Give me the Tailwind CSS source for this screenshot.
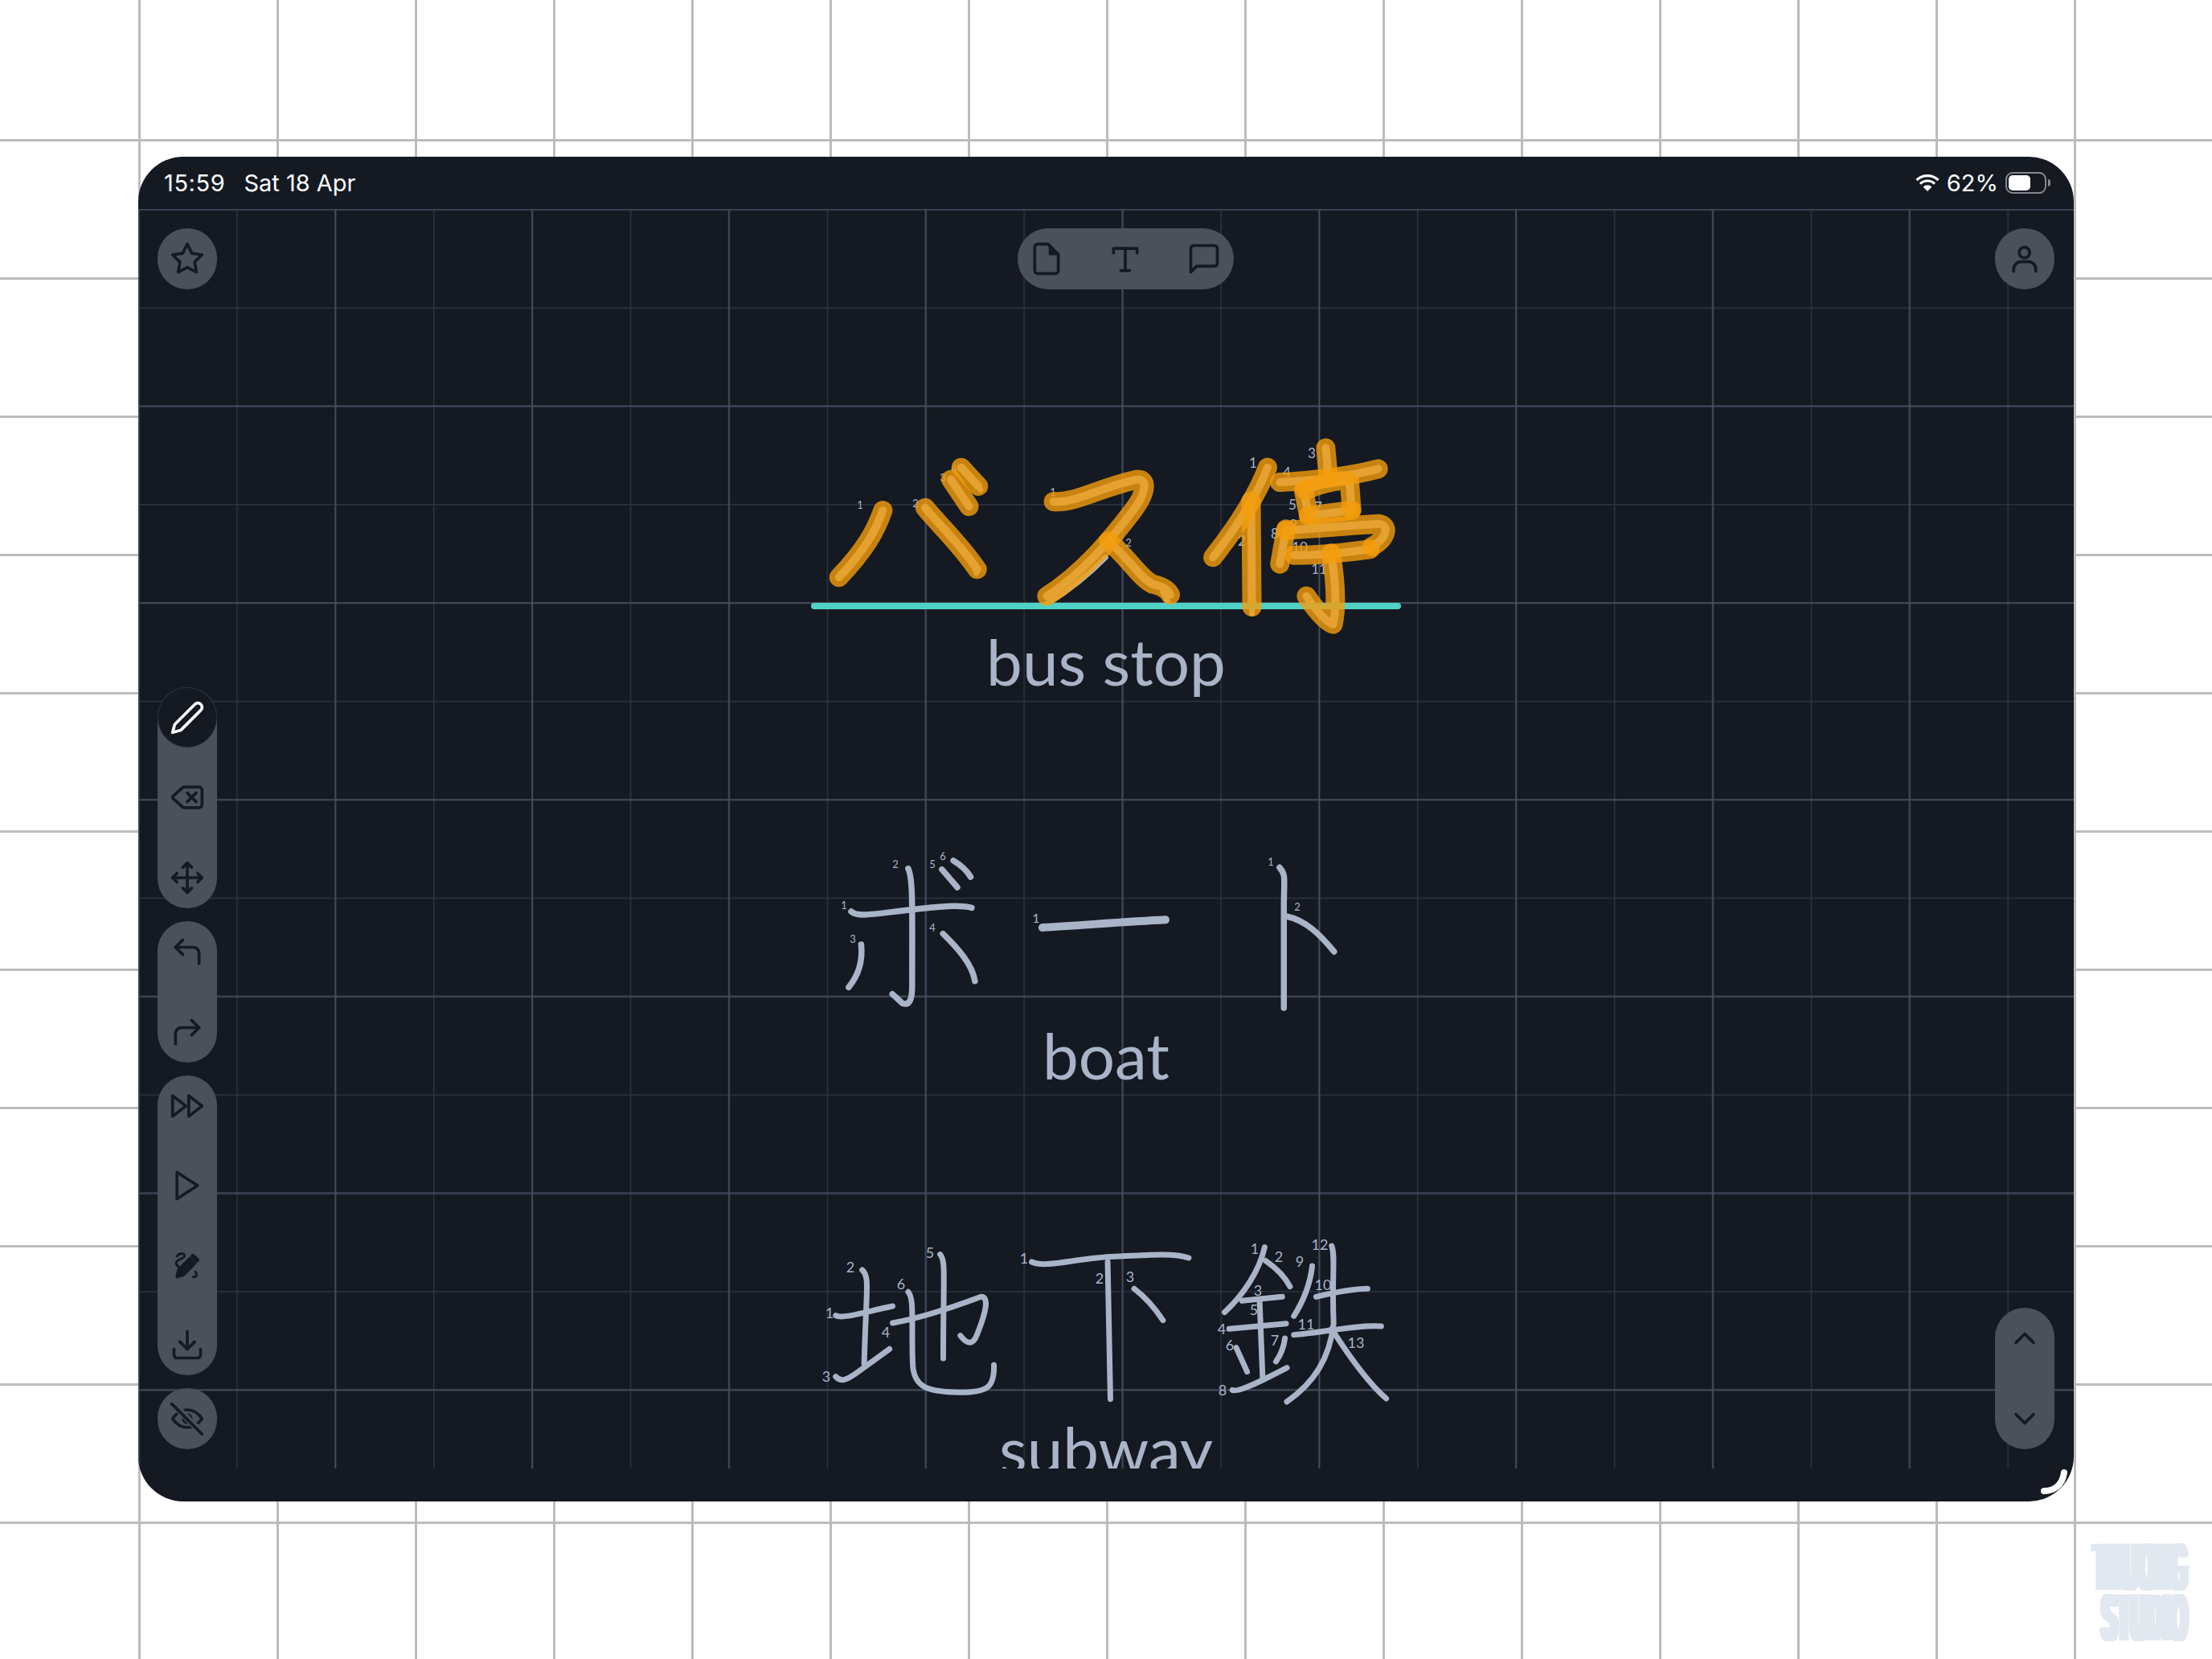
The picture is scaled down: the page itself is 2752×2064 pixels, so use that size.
<!DOCTYPE html>
<html lang="en">
<head>
    <meta charset="UTF-8">
    <title>Kana practice</title>
    <script src="https://cdn.jsdelivr.net/npm/@tailwindcss/browser@4"></script>
</head>
<body class="bg-white">
<div class="relative w-[2752px] h-[2064px] overflow-hidden pl-[172px] pt-[195px] font-['Inter',sans-serif]">

    <!-- paper grid -->
    <div class="absolute left-0 right-0 top-[173px] bottom-0 bg-[linear-gradient(#bcbcbc_3px,transparent_3px)] bg-[size:172px_172px]"></div>
    <div class="absolute left-[172px] right-0 top-0 bottom-0 bg-[linear-gradient(90deg,#bcbcbc_3px,transparent_3px)] bg-[size:172px_172px]"></div>

    <!-- tablet -->
    <div class="relative w-[2408px] h-[1673px] rounded-[56px] bg-[#141922] overflow-hidden">

        <!-- status bar -->
        <div class="h-[65px] pl-[32px] pr-[29px] flex items-center justify-between text-white text-[29px] leading-none">
            <div class="flex gap-[23px]">
                <span class="tracking-[0.6px]">15:59</span>
                <span>Sat 18 Apr</span>
            </div>
            <div class="flex items-center">
                <svg class="w-[30px] h-[21px] mr-[9px]" viewBox="0 0 30 21" fill="none" stroke="white" stroke-width="3.2">
                    <path d="M1.5 7 A19.5 19.5 0 0 1 28.5 7"/>
                    <path d="M6 11.6 A13 13 0 0 1 24 11.6"/>
                    <path d="M15 21 L9.6 15.4 A7.6 7.6 0 0 1 20.4 15.4 Z" fill="white" stroke="none"/>
                </svg>
                <span class="mr-[9px]">62%</span>
                <div class="w-[51px] h-[27px] rounded-[9px] border-2 border-[#85888f] p-[2px]">
                    <div class="w-[27px] h-full rounded-[5px] bg-white"></div>
                </div>
                <div class="w-[3px] h-[9px] ml-[2px] rounded-r-full bg-[#85888f]"></div>
            </div>
        </div>

        <!-- writing canvas -->
        <div class="relative h-[1567px] overflow-hidden flex flex-col items-center pt-[280px] text-[#aab4c8] text-[80px] leading-[64px] font-['Lato',sans-serif]">
            <svg class="absolute inset-0 w-full h-full" fill="none">
                <defs>
                    <pattern id="sheet" width="244.8" height="244.8" patternUnits="userSpaceOnUse" patternTransform="translate(-60.6 -60.6)">
                        <path d="M183.6 0V244.8M0 183.6H244.8" stroke="#2d3441" stroke-width="1.5"/>
                        <path d="M61.2 0V244.8M0 61.2H244.8" stroke="#454e60" stroke-width="2"/>
                    </pattern>
                </defs>
                <rect width="100%" height="100%" fill="url(#sheet)"/>
            </svg>

            <!-- バス停 -->
            <svg class="relative shrink-0 overflow-visible [&_path]:[vector-effect:non-scaling-stroke]" width="800" height="250" viewBox="976 540 800 250" fill="none" stroke-linecap="round" stroke-linejoin="round">
                <defs>
                    <g id="bus" transform="translate(980 520) scale(.5102 .3333)">
                        <path d="M232 345C215 420 190 490 125 595"/>
                        <path d="M335 335C370 400 420 470 462 565"/>
                        <path d="M398 230L442 330"/>
                        <path d="M423 185L465 255"/>
                        <path d="M648 312C700 320 760 260 850 230C880 225 875 280 840 350C790 450 720 580 632 665"/>
                        <path d="M782 460C830 520 860 600 890 620C920 630 930 650 933 660"/>
                        <path d="M1170 185C1150 270 1100 400 1037 520"/>
                        <path d="M1130 310L1132 705"/>
                        <path d="M1312 112L1318 215"/>
                        <path d="M1200 240C1280 235 1380 215 1440 190"/>
                        <path d="M1258 270L1270 360"/>
                        <path d="M1262 270C1300 245 1350 225 1370 240L1375 340"/>
                        <path d="M1270 365L1375 345"/>
                        <path d="M1215 415L1200 545"/>
                        <path d="M1215 420C1300 410 1380 400 1440 395C1470 400 1460 450 1425 480"/>
                        <path d="M1235 512C1300 515 1370 500 1420 490"/>
                        <path d="M1325 505C1335 600 1340 700 1330 770C1310 760 1280 700 1265 665"/>
                    </g>
                </defs>
                <use href="#bus" stroke="#aab4c8" stroke-width="10"/>
                <g transform="translate(980 520) scale(.5102 .3333)" stroke="#aab4c8" stroke-width="7">
                    <path d="M465 250L470 268"/>
                    <path d="M458 565L460 578"/>
                    <path d="M775 520C730 590 690 640 635 690"/>
                    <path d="M915 650L927 685"/>
                    <path d="M1132 705L1132 730"/>
                </g>
                <g fill="#aab4c8" stroke="none" font-size="13" text-anchor="middle" dominant-baseline="central">
                    <text x="1070" y="628">1</text>
                    <text x="1139" y="626">2</text>
                    <text x="1173" y="594">3</text>
                    <text x="1187" y="583">4</text>
                    <text x="1310" y="612">1</text>
                    <text x="1404" y="675">2</text>
                    <g font-size="17">
                        <text x="1559" y="575">1</text>
                        <text x="1545" y="672">2</text>
                        <text x="1632" y="563">3</text>
                        <text x="1601" y="587">4</text>
                        <text x="1608" y="627">5</text>
                        <text x="1628" y="607">6</text>
                        <text x="1640" y="630">7</text>
                        <text x="1586" y="663">8</text>
                        <text x="1609" y="652">9</text>
                        <text x="1617" y="680">10</text>
                        <text x="1641" y="707">11</text>
                    </g>
                </g>
                <path d="M1013 754H1739" stroke="#4fd1c5" stroke-width="8"/>
                <use href="#bus" stroke="#f59e0b" stroke-opacity=".8" stroke-width="24"/>
            </svg>
            <p class="relative">bus stop</p>

            <!-- ボート -->
            <svg class="relative shrink-0 mt-[196px] overflow-visible [&_path]:[vector-effect:non-scaling-stroke]" width="800" height="230" viewBox="976 1050 800 230" fill="none" stroke="#aab4c8" stroke-width="7.5" stroke-linecap="round" stroke-linejoin="round">
                <g transform="translate(1000 1030) scale(.4464 .3333)">
                    <path d="M132 312C150 335 200 320 300 305C370 295 430 285 468 298"/>
                    <path d="M291 152C305 190 302 300 302 590C302 640 295 665 275 655L247 620"/>
                    <path d="M160 435C165 500 150 555 125 595"/>
                    <path d="M388 395C430 450 470 510 477 572"/>
                    <path d="M385 155L428 222"/>
                    <path d="M417 122C440 140 455 160 465 183"/>
                    <path d="M665 372C760 365 900 350 1008 343" stroke-width="10"/>
                    <path d="M1326 148C1345 175 1338 190 1338 300L1338 672"/>
                    <path d="M1345 330C1400 345 1440 400 1478 462"/>
                </g>
                <g fill="#aab4c8" stroke="none" font-size="13" text-anchor="middle" dominant-baseline="central">
                    <text x="1050" y="1126">1</text>
                    <text x="1114" y="1075">2</text>
                    <text x="1061" y="1168">3</text>
                    <text x="1160" y="1154">4</text>
                    <text x="1160" y="1075">5</text>
                    <text x="1173" y="1065">6</text>
                    <text x="1289" y="1141" font-size="16">1</text>
                    <text x="1581" y="1072">1</text>
                    <text x="1614" y="1128">2</text>
                </g>
            </svg>
            <p class="relative">boat</p>

            <!-- 地下鉄 -->
            <svg class="relative shrink-0 mt-[186px] overflow-visible [&_path]:[vector-effect:non-scaling-stroke]" width="800" height="240" viewBox="976 1530 800 240" fill="none" stroke="#aab4c8" stroke-width="7" stroke-linecap="round" stroke-linejoin="round">
                <g transform="translate(1000 1520) scale(.4847 .3333)">
                    <path d="M82 350C100 365 160 335 228 315"/>
                    <path d="M150 180C170 205 160 250 155 530"/>
                    <path d="M82 578C95 600 110 590 130 570L220 475"/>
                    <path d="M228 378C300 360 400 310 455 280C475 280 470 330 445 420C435 460 420 460 402 425"/>
                    <path d="M350 122C365 145 358 200 358 510"/>
                    <path d="M268 262C285 285 275 400 280 540C285 620 320 635 400 637C470 637 490 620 488 535"/>
                    <path d="M585 150C620 175 700 135 800 130C870 125 950 115 988 135"/>
                    <path d="M780 150L787 662"/>
                    <path d="M848 250C875 280 900 320 922 368"/>
                    <path d="M1183 95C1170 180 1130 270 1080 338"/>
                    <path d="M1185 145C1210 170 1235 205 1248 242"/>
                    <path d="M1125 295L1228 280"/>
                    <path d="M1170 295L1178 590"/>
                    <path d="M1092 400L1238 380"/>
                    <path d="M1110 470L1138 560"/>
                    <path d="M1235 435C1232 470 1225 495 1212 522"/>
                    <path d="M1100 628C1115 640 1180 590 1240 545"/>
                    <path d="M1305 165C1300 230 1285 290 1258 352"/>
                    <path d="M1315 280C1360 265 1410 250 1447 250"/>
                    <path d="M1258 422C1330 415 1410 385 1482 390"/>
                    <path d="M1355 90C1365 130 1355 200 1360 380C1350 510 1310 600 1240 672"/>
                    <path d="M1355 400C1390 480 1440 590 1495 660"/>
                </g>
                <g fill="#aab4c8" stroke="none" font-size="18" text-anchor="middle" dominant-baseline="central">
                    <text x="1032" y="1633">1</text>
                    <text x="1058" y="1576">2</text>
                    <text x="1028" y="1712">3</text>
                    <text x="1102" y="1657">4</text>
                    <text x="1157" y="1558">5</text>
                    <text x="1121" y="1597">6</text>
                    <text x="1274" y="1565">1</text>
                    <text x="1368" y="1590">2</text>
                    <text x="1406" y="1588">3</text>
                    <text x="1561" y="1553">1</text>
                    <text x="1591" y="1563">2</text>
                    <text x="1565" y="1605">3</text>
                    <text x="1520" y="1653">4</text>
                    <text x="1560" y="1629">5</text>
                    <text x="1530" y="1673">6</text>
                    <text x="1586" y="1667">7</text>
                    <text x="1521" y="1729">8</text>
                    <text x="1617" y="1569">9</text>
                    <text x="1646" y="1598">10</text>
                    <text x="1625" y="1647">11</text>
                    <text x="1642" y="1548">12</text>
                    <text x="1687" y="1670">13</text>
                </g>
            </svg>
            <p class="relative">subway</p>
        </div>

        <!-- favourite -->
        <button class="absolute left-6 top-[89px] w-[74px] h-[76px] rounded-full bg-[#4b505b] flex items-center justify-center">
            <svg class="w-11 h-11" viewBox="0 0 24 24" fill="none" stroke="#141922" stroke-width="2" stroke-linecap="round" stroke-linejoin="round"><polygon points="12 2 15.09 8.26 22 9.27 17 14.14 18.18 21.02 12 17.77 5.82 21.02 7 14.14 2 9.27 8.91 8.26"/></svg>
        </button>

        <!-- note type -->
        <div class="absolute left-[1094px] top-[89px] h-[76px] pl-[14px] pr-[15px] rounded-full bg-[#4b505b] flex items-center gap-[54px]">
            <svg class="w-11 h-11" viewBox="0 0 24 24" fill="none" stroke="#141922" stroke-width="2" stroke-linecap="round" stroke-linejoin="round"><path d="M13 2H6a2 2 0 0 0-2 2v16a2 2 0 0 0 2 2h12a2 2 0 0 0 2-2V9z"/><path d="M14 3v6h6z" fill="#141922" stroke-width="1"/></svg>
            <svg class="w-11 h-11" viewBox="0 0 24 24" fill="none" stroke="#141922" stroke-width="2" stroke-linecap="round" stroke-linejoin="round"><path d="M4 8V5h16v3"/><path d="M12 5v15"/><path d="M9 20h6"/></svg>
            <svg class="w-11 h-11" viewBox="0 0 24 24" fill="none" stroke="#141922" stroke-width="2" stroke-linecap="round" stroke-linejoin="round"><path d="M21 15a2 2 0 0 1-2 2H7l-4 4V5a2 2 0 0 1 2-2h14a2 2 0 0 1 2 2z"/></svg>
        </div>

        <!-- account -->
        <button class="absolute right-6 top-[89px] w-[74px] h-[76px] rounded-full bg-[#4b505b] flex items-center justify-center">
            <svg class="w-11 h-11" viewBox="0 0 24 24" fill="none" stroke="#141922" stroke-width="2" stroke-linecap="round" stroke-linejoin="round"><circle cx="11.8" cy="7.8" r="3.6"/><path d="M4.5 20.5V19a5 5 0 0 1 5-5h5a5 5 0 0 1 5 5v1.5"/></svg>
        </button>

        <!-- left tools -->
        <div class="absolute left-6 bottom-[65px] w-[74px] flex flex-col gap-4">
            <div class="h-[275px] rounded-full bg-[#4b505b] flex flex-col items-center">
                <div class="w-[74px] h-[75px] shrink-0 rounded-full bg-[#141922] border border-[#262b36] flex items-center justify-center">
                    <svg class="w-11 h-11" viewBox="0 0 24 24" fill="none" stroke="white" stroke-width="2" stroke-linecap="round" stroke-linejoin="round"><path d="M17 3a2.85 2.83 0 1 1 4 4L7.5 20.5 2 22l1.5-5.5Z"/></svg>
                </div>
                <svg class="w-11 h-11 mt-[40px]" viewBox="0 0 24 24" fill="none" stroke="#141922" stroke-width="2" stroke-linecap="round" stroke-linejoin="round"><path d="M10 5a2 2 0 0 0-1.344.519l-6.328 5.74a1 1 0 0 0 0 1.481l6.328 5.741A2 2 0 0 0 10 19h10a2 2 0 0 0 2-2V7a2 2 0 0 0-2-2z"/><path d="m12 9 6 6"/><path d="m18 9-6 6"/></svg>
                <svg class="w-11 h-11 mt-14" viewBox="0 0 24 24" fill="none" stroke="#141922" stroke-width="2" stroke-linecap="round" stroke-linejoin="round"><path d="M5 9l-3 3 3 3"/><path d="M9 5l3-3 3 3"/><path d="M15 19l-3 3-3-3"/><path d="M19 9l3 3-3 3"/><path d="M2 12h20"/><path d="M12 2v20"/></svg>
            </div>
            <div class="h-[176px] py-4 rounded-full bg-[#4b505b] flex flex-col items-center gap-14">
                <svg class="w-11 h-11" viewBox="0 0 24 24" fill="none" stroke="#141922" stroke-width="2" stroke-linecap="round" stroke-linejoin="round"><path d="M9 14 4 9l5-5"/><path d="M20 20v-7a4 4 0 0 0-4-4H4"/></svg>
                <svg class="w-11 h-11" viewBox="0 0 24 24" fill="none" stroke="#141922" stroke-width="2" stroke-linecap="round" stroke-linejoin="round"><path d="m15 14 5-5-5-5"/><path d="M4 20v-7a4 4 0 0 1 4-4h12"/></svg>
            </div>
            <div class="h-[373px] py-4 rounded-full bg-[#4b505b] flex flex-col items-center gap-[55px]">
                <svg class="w-11 h-11" viewBox="0 0 24 24" fill="none" stroke="#141922" stroke-width="2" stroke-linecap="round" stroke-linejoin="round"><polygon points="13 19 22 12 13 5"/><polygon points="2 19 11 12 2 5"/></svg>
                <svg class="w-11 h-11" viewBox="0 0 24 24" fill="none" stroke="#141922" stroke-width="2" stroke-linecap="round" stroke-linejoin="round"><polygon points="5 3 19 12 5 21"/></svg>
                <svg class="w-11 h-11" viewBox="0 0 24 24" fill="none" stroke="#141922" stroke-width="2" stroke-linecap="round" stroke-linejoin="round"><path d="M5 20L6 15.2L13.8 7.4L17.2 10.8L9.4 18.6Z" fill="#141922"/><path d="M15.8 5.8l2.8 2.8" stroke-width="3"/><path d="M5 6C6 3.8 10 3.6 10.2 5.6C10.4 7.6 4.4 8 4.4 10.5C4.4 11.5 5 12.4 6 13" stroke-width="1.6"/><path d="M16 20C18 20.5 19 18 17.5 16.5" stroke-width="1.6"/></svg>
                <svg class="w-11 h-11" viewBox="0 0 24 24" fill="none" stroke="#141922" stroke-width="2" stroke-linecap="round" stroke-linejoin="round"><path d="M21 15v4a2 2 0 0 1-2 2H5a2 2 0 0 1-2-2v-4"/><path d="M7 10l5 5 5-5"/><path d="M12 15V3"/></svg>
            </div>
            <button class="h-[76px] rounded-full bg-[#4b505b] flex items-center justify-center">
                <svg class="w-11 h-11" viewBox="0 0 24 24" fill="none" stroke="#141922" stroke-width="2" stroke-linecap="round" stroke-linejoin="round"><path d="M2 12C5 7.5 9 6 12 6C15 6 19 7.5 22 12C19 16.5 15 18 12 18C9 18 5 16.5 2 12Z"/><circle cx="12" cy="12" r="2.6" fill="#141922"/><path d="M2 1.5L22.5 22.5" stroke="#4b505b" stroke-width="4.5"/><path d="M1.5 2L22 22.5"/></svg>
            </button>
        </div>

        <!-- page scroll -->
        <div class="absolute right-6 bottom-[65px] w-[74px] h-[176px] py-4 rounded-full bg-[#4b505b] flex flex-col items-center gap-14">
            <svg class="w-11 h-11" viewBox="0 0 24 24" fill="none" stroke="#141922" stroke-width="2" stroke-linecap="round" stroke-linejoin="round"><path d="m6 15 6-6 6 6"/></svg>
            <svg class="w-11 h-11" viewBox="0 0 24 24" fill="none" stroke="#141922" stroke-width="2" stroke-linecap="round" stroke-linejoin="round"><path d="m6 9 6 6 6-6"/></svg>
        </div>

        <!-- corner mark -->
        <svg class="absolute inset-0 w-full h-full pointer-events-none" viewBox="172 195 2408 1673" fill="none"><path d="M2543 1855C2555 1855 2566 1848 2568 1832" stroke="white" stroke-width="8" stroke-linecap="round"/></svg>
    </div>

    <!-- studio mark -->
    <svg class="absolute left-[2590px] top-[1905px]" width="150" height="150" viewBox="2590 1905 150 150" fill="#e2e8f0" font-family="Liberation Sans, sans-serif" font-weight="700" font-size="84">
        <defs>
            <filter id="fatten" x="-10%" y="-10%" width="120%" height="120%"><feMorphology operator="dilate" radius="4 0"/></filter>
        </defs>
        <g filter="url(#fatten)">
            <text x="2605" y="1978" textLength="116" lengthAdjust="spacingAndGlyphs">THUONG</text>
            <text x="2615" y="2041" textLength="106" lengthAdjust="spacingAndGlyphs">STUDIO</text>
        </g>
    </svg>
</div>
</body>
</html>
